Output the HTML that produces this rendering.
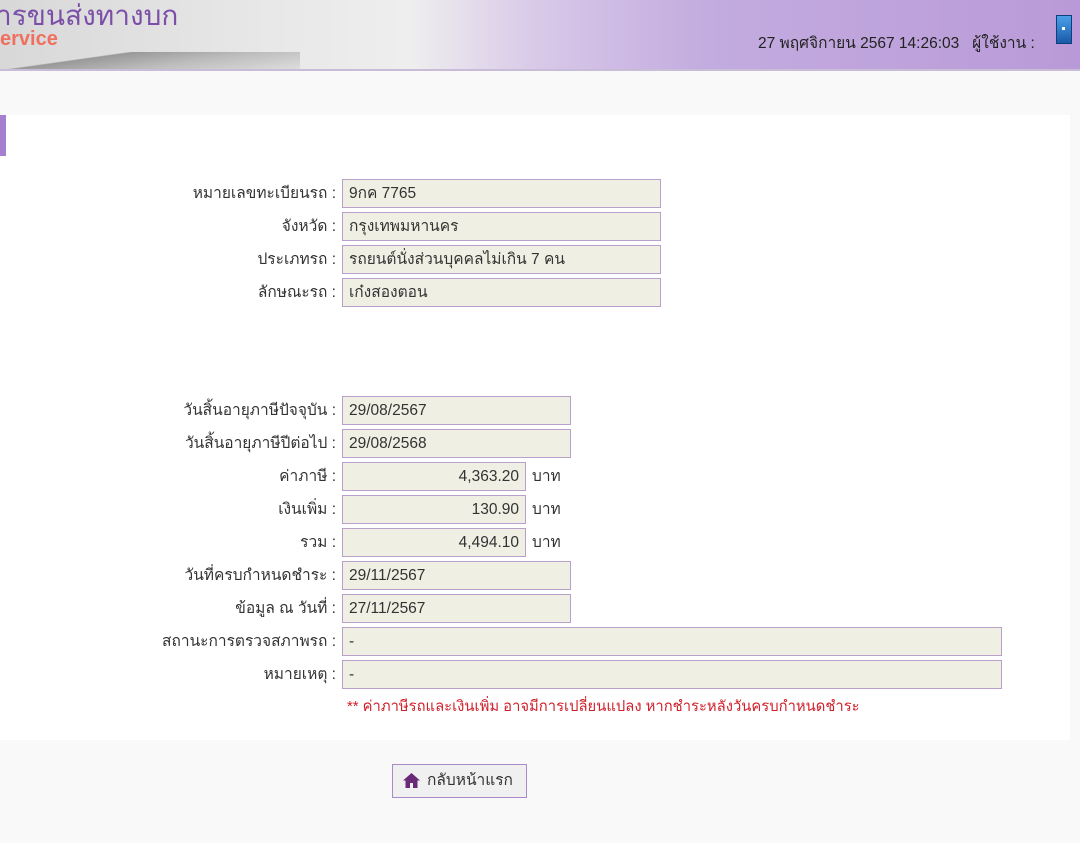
<!DOCTYPE html>
<html><head><meta charset="utf-8"><style>
body{margin:0;width:1080px;height:843px;background:#f9f9f9;font-family:"Liberation Sans","Noto Sans CJK SC",sans-serif;font-size:15.5px;color:#333;position:relative;overflow:hidden}
.hdr{position:absolute;left:0;top:0;width:1080px;height:69px;background:linear-gradient(90deg,#d8d8d8 0%,#e8e8e8 25%,#eeeeee 38%,#d8c8e8 50%,#c3acdf 65%,#b99ad8 100%);border-bottom:2px solid #c9bcd6}
.road{position:absolute;left:0;top:52px;width:300px;height:17px;background:linear-gradient(172deg,transparent 30%,#999 32%,#bbb 60%,#ddd 100%)}
.t1{position:absolute;left:-4px;top:-6px;font-size:28px;color:#7b4fa8}
.t2{position:absolute;left:0;top:28px;font-size:20px;color:#f07060;font-weight:bold}
.dt{position:absolute;left:758px;top:30px;font-size:15.5px;color:#222}
.door{position:absolute;left:1056px;top:15px;width:14px;height:27px;background:linear-gradient(#4aa0e8,#1a5aa8);border:1px solid #0e3e7c}
.door:after{content:"";position:absolute;left:5px;top:11px;width:3px;height:3px;background:#fff}
.panel{position:absolute;left:0;top:115px;width:1070px;height:625px;background:#fff}
.bar{position:absolute;left:0;top:115px;width:6px;height:41px;background:#a57fd0}
.lab{position:absolute;right:744px;text-align:right;white-space:nowrap;line-height:29px}
.inp{position:absolute;left:342px;line-height:27px;border:1px solid #b9a0cc;background:#efefe3;padding:0 6px;box-sizing:border-box;height:29px;white-space:nowrap}
.r{text-align:right}
.u{position:absolute;left:532px;line-height:29px}
.note{position:absolute;left:347px;top:694px;color:#d0202a;font-size:14.8px}
.btn{position:absolute;left:392px;top:764px;width:135px;height:34px;border:1px solid #a98bc8;background:#f0f0f0;box-sizing:border-box;line-height:32px;padding-left:34px;color:#333}
.btn svg{position:absolute;left:10px;top:8px}
</style></head><body>
<div class="hdr"><div class="road"></div><div class="t1">ารขนส่งทางบก</div><div class="t2">ervice</div>
<div class="dt">27 พฤศจิกายน 2567 14:26:03 &nbsp;&nbsp;ผู้ใช้งาน :</div><div class="door"></div></div>
<div class="panel"></div><div class="bar"></div>

<div class="lab" style="top:179px">หมายเลขทะเบียนรถ :</div><div class="inp" style="top:179px;width:319px">9กค 7765</div>
<div class="lab" style="top:212px">จังหวัด :</div><div class="inp" style="top:212px;width:319px">กรุงเทพมหานคร</div>
<div class="lab" style="top:245px">ประเภทรถ :</div><div class="inp" style="top:245px;width:319px">รถยนต์นั่งส่วนบุคคลไม่เกิน 7 คน</div>
<div class="lab" style="top:278px">ลักษณะรถ :</div><div class="inp" style="top:278px;width:319px">เก๋งสองตอน</div>

<div class="lab" style="top:396px">วันสิ้นอายุภาษีปัจจุบัน :</div><div class="inp" style="top:396px;width:229px">29/08/2567</div>
<div class="lab" style="top:429px">วันสิ้นอายุภาษีปีต่อไป :</div><div class="inp" style="top:429px;width:229px">29/08/2568</div>
<div class="lab" style="top:462px">ค่าภาษี :</div><div class="inp r" style="top:462px;width:184px">4,363.20</div><div class="u" style="top:462px">บาท</div>
<div class="lab" style="top:495px">เงินเพิ่ม :</div><div class="inp r" style="top:495px;width:184px">130.90</div><div class="u" style="top:495px">บาท</div>
<div class="lab" style="top:528px">รวม :</div><div class="inp r" style="top:528px;width:184px">4,494.10</div><div class="u" style="top:528px">บาท</div>
<div class="lab" style="top:561px">วันที่ครบกำหนดชำระ :</div><div class="inp" style="top:561px;width:229px">29/11/2567</div>
<div class="lab" style="top:594px">ข้อมูล ณ วันที่ :</div><div class="inp" style="top:594px;width:229px">27/11/2567</div>
<div class="lab" style="top:627px">สถานะการตรวจสภาพรถ :</div><div class="inp" style="top:627px;width:660px">-</div>
<div class="lab" style="top:660px">หมายเหตุ :</div><div class="inp" style="top:660px;width:660px">-</div>

<div class="note">** ค่าภาษีรถและเงินเพิ่ม อาจมีการเปลี่ยนแปลง หากชำระหลังวันครบกำหนดชำระ</div>
<div class="btn"><svg width="17" height="15" viewBox="0 0 17 15"><path d="M8.5 0L0 7.5h2.5V15h4.5v-5h3v5h4.5V7.5H17z" fill="#6a2a78"/></svg>กลับหน้าแรก</div>
</body></html>
